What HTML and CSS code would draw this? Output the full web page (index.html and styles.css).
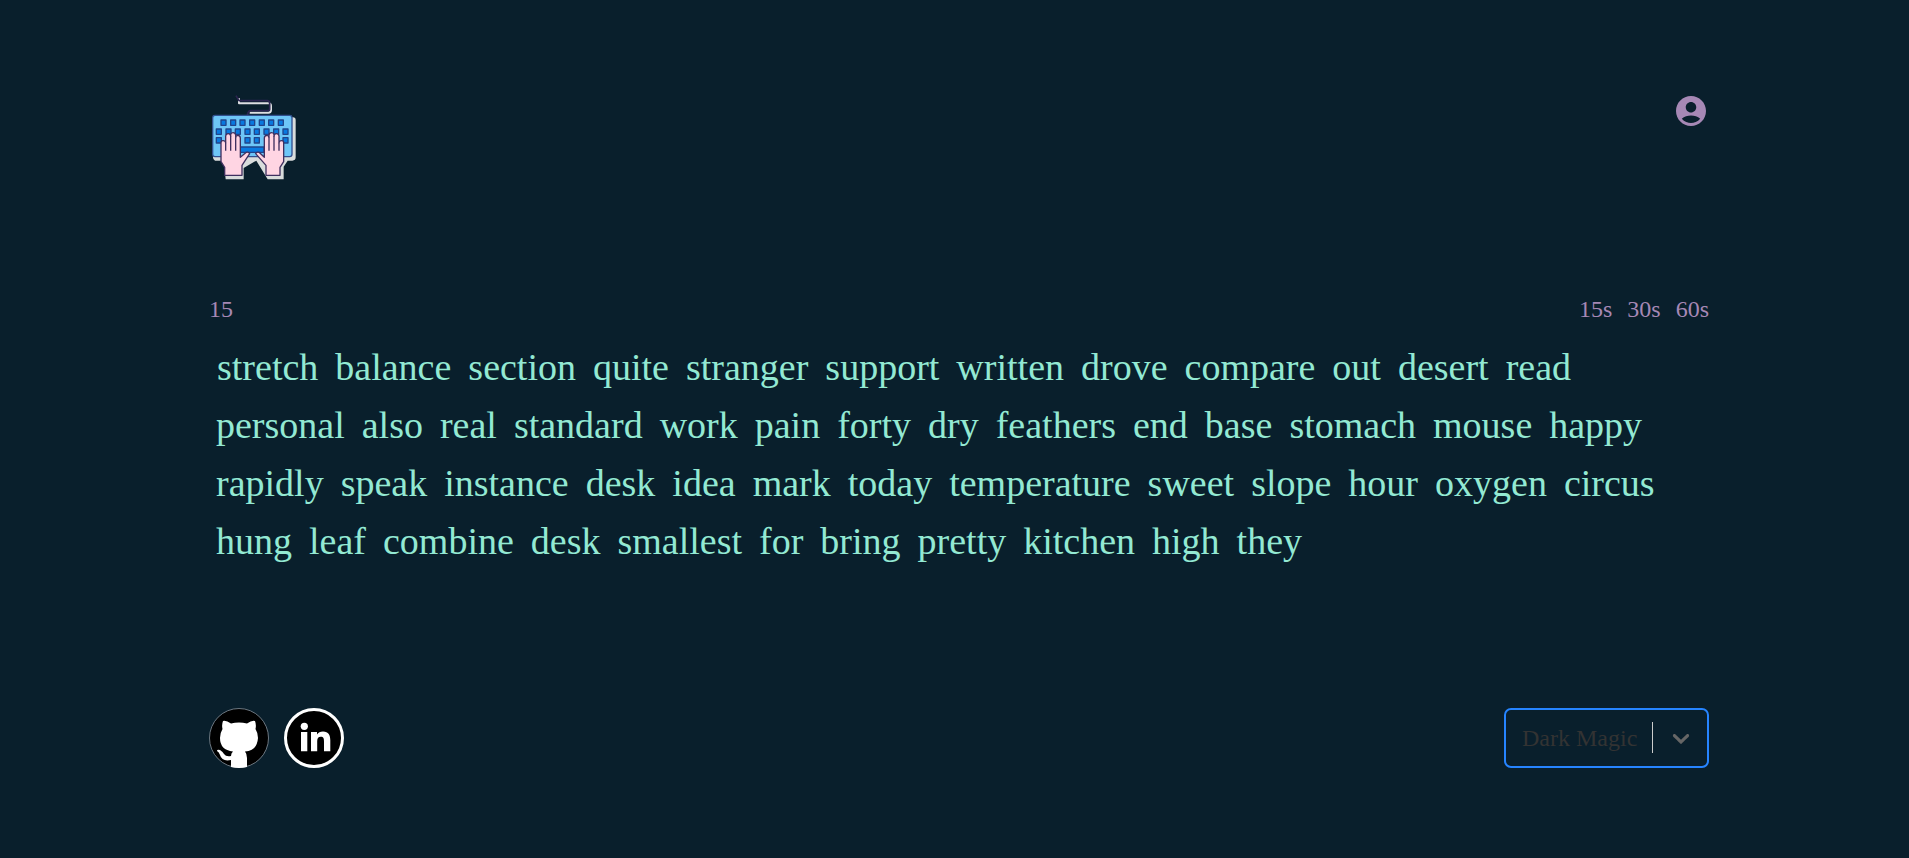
FILE: index.html
```html
<!DOCTYPE html>
<html lang="en">
<head>
<meta charset="utf-8">
<meta name="viewport" content="width=device-width, initial-scale=1">
<title>Typing Test</title>
<link rel="stylesheet" href="styles.css">
</head>
<body>
<div class="canvas">
  <header class="header">
    <svg class="logo" viewBox="28 25 270 270" role="img" aria-label="Typing test logo" stroke-linejoin="round">
      <g fill="#d9dcdc">
        <path d="M48 98H280Q288 98 288 106V218Q288 228 278 228H264L252 246V284H204L170 228L132 250V284H78L72 228H46Q40 226 40 218Z"/>
      </g>
      <path d="M118 41V56H208Q214 57 214 64V76Q214 84 206 84H150" fill="none" stroke="#dddfe2" stroke-width="6"/>
      <path d="M109 33L118 48H204Q211 49 210 60V74Q210 78 204 78H152Q145 80 143 91" fill="none" stroke="#2b2450" stroke-width="5"/>
      <rect x="39" y="92" width="238" height="124" rx="7" fill="#6ec6f7" stroke="#33508f" stroke-width="4"/>
      <g fill="#0879e0" stroke="#20458c" stroke-width="4">
        <path d="M64 106h15v16h-15zM93 106h15v16h-15zM121 106h15v16h-15zM150 106h15v16h-15zM179 106h15v16h-15zM207 106h15v16h-15zM236 106h15v16h-15z"/>
        <path d="M50 133h15v16h-15zM79 133h15v16h-15zM107 133h15v16h-15zM136 133h15v16h-15zM164 133h15v16h-15zM193 133h15v16h-15zM222 133h15v16h-15zM250 133h15v16h-15z"/>
        <path d="M50 159h15v16h-15zM136 159h15v16h-15zM164 159h15v16h-15zM250 159h15v16h-15zM121 187h72v16h-72z"/>
      </g>
      <path d="M75 272V248L64 231V174Q64 168 70 168Q77 168 78 174V154Q79 147 86 147Q92 147 93 154V150Q94 144 100 144Q107 144 108 151V158Q109 152 115 152Q122 153 122 160V218L140 203Q147 201 150 207L127 242V272Z" fill="#ffd5e3" stroke="#40305f" stroke-width="4"/>
      <path d="M78 174V198M93 154V198M108 158V198" fill="none" stroke="#40305f" stroke-width="4"/>
      <g transform="matrix(-1 0 0 1 316 0)">
        <path d="M75 272V248L64 231V174Q64 168 70 168Q77 168 78 174V154Q79 147 86 147Q92 147 93 154V150Q94 144 100 144Q107 144 108 151V158Q109 152 115 152Q122 153 122 160V218L138 203Q145 201 148 207L117 242V272Z" fill="#ffd5e3" stroke="#40305f" stroke-width="4"/>
        <path d="M78 174V198M93 154V198M108 158V198" fill="none" stroke="#40305f" stroke-width="4"/>
      </g>
    </svg>
    <button class="account" type="button" aria-label="Account">
      <svg viewBox="0 0 24 24" aria-hidden="true"><path fill="currentColor" d="M12 2C6.48 2 2 6.480 2 12s4.480 10 10 10 10-4.480 10-10S17.520 2 12 2zm0 4c1.930 0 3.500 1.570 3.500 3.500S13.930 13 12 13s-3.500-1.570-3.500-3.500S10.070 6 12 6zm0 14c-2.030 0-4.430-.82-6.140-2.880C7.550 15.800 9.680 15 12 15s4.450.8 6.140 2.120C16.430 19.180 14.030 20 12 20z"/></svg>
    </button>
  </header>

  <main class="test">
    <div class="menu">
      <span>15</span>
      <div class="modes">
        <button type="button">15s</button>
        <button type="button">30s</button>
        <button type="button">60s</button>
      </div>
    </div>
    <div class="words">
      <span><span class="current">s</span>tretch</span><span>balance</span><span>section</span><span>quite</span><span>stranger</span><span>support</span><span>written</span><span>drove</span><span>compare</span><span>out</span><span>desert</span><span>read</span>
      <span>personal</span><span>also</span><span>real</span><span>standard</span><span>work</span><span>pain</span><span>forty</span><span>dry</span><span>feathers</span><span>end</span><span>base</span><span>stomach</span><span>mouse</span><span>happy</span>
      <span>rapidly</span><span>speak</span><span>instance</span><span>desk</span><span>idea</span><span>mark</span><span>today</span><span>temperature</span><span>sweet</span><span>slope</span><span>hour</span><span>oxygen</span><span>circus</span>
      <span>hung</span><span>leaf</span><span>combine</span><span>desk</span><span>smallest</span><span>for</span><span>bring</span><span>pretty</span><span>kitchen</span><span>high</span><span>they</span>
    </div>
  </main>

  <footer class="footer">
    <nav class="links">
      <a href="#github" aria-label="GitHub">
        <svg viewBox="0 0 60 60" aria-hidden="true">
          <circle cx="30" cy="30" r="29.500" fill="#000" stroke="#87919a" stroke-width=".8"/>
          <path fill="#fff" d="M14 13Q17 12 22 15.500Q30 13.500 38 15.500Q43 12 46 13Q47.500 17 46.500 21Q49 25 49 30Q48 43 36 43.500Q38 46 38 50V59Q30 61 22 59V52Q13 54 11 47Q10 44 8 43Q8 41 11 42Q14 44 15 46Q17 49 22 48Q22 45 24 43.500Q11 42 11 30Q11 25 13.500 21Q12.500 17 14 13Z"/>
        </svg>
      </a>
      <a href="#linkedin" aria-label="LinkedIn">
        <svg viewBox="0 0 60 60" aria-hidden="true">
          <circle cx="30" cy="30" r="28.500" fill="#000" stroke="#fff" stroke-width="3"/>
          <circle cx="20.300" cy="18.300" r="3.600" fill="#fff"/>
          <path fill="#fff" d="M17 24h6.300v19.200H17zM27 24h6v2.600c1.200-2 3.300-3.200 6-3.200 5.600 0 7.300 3.500 7.300 8.800v11H40v-9.700c0-2.800-.4-4.800-3.200-4.800s-3.600 2-3.600 4.800v9.700H27z"/>
        </svg>
      </a>
    </nav>
    <div class="theme">
      <select aria-label="Theme"><option>Dark Magic</option></select>
      <span class="indicator" aria-hidden="true">
        <svg viewBox="0 0 20 20"><path fill="#666" d="M4.516 7.548c.436-.446 1.043-.481 1.576 0L10 11.295l3.908-3.747c.533-.481 1.141-.446 1.574 0 .436.445.408 1.197 0 1.615-.406.418-4.695 4.502-4.695 4.502a1.095 1.095 0 0 1-1.576 0S4.924 9.581 4.516 9.163s-.436-1.170 0-1.615z"/></svg>
      </span>
    </div>
  </footer>
</div>
</body>
</html>
```

FILE: styles.css
```css
* {
  box-sizing: border-box;
}

body {
  margin: 0;
  padding: 0 0 0 9px;
  background: #091f2c;
  color: #a688b5;
  font-family: "Liberation Serif", "Times New Roman", serif;
  font-size: 24px;
  line-height: 28px;
}

button {
  padding: 0;
  border: 0;
  background: none;
  color: inherit;
  font: inherit;
  cursor: pointer;
}

svg {
  display: block;
}

.canvas {
  display: grid;
  grid-template-rows: auto 1fr auto;
  max-width: 1500px;
  min-height: 100vh;
  margin: 0 auto;
  padding: 93px 0 90px;
}

.header {
  display: flex;
  align-items: flex-start;
  justify-content: space-between;
}

.logo {
  width: 90px;
  height: 90px;
}

.account svg {
  width: 36px;
  height: 36px;
}

.test {
  padding: 112px 0 40px;
}

.menu {
  display: flex;
  justify-content: space-between;
}

.modes {
  display: flex;
  gap: 15px;
}

.words {
  display: flex;
  flex-wrap: wrap;
  column-gap: 17px;
  padding: 15px 7px 0;
  color: #93e9d3;
  font-size: 38px;
  line-height: 58px;
}

.current {
  border-left: 1px solid transparent;
}

.footer {
  display: flex;
  align-items: center;
  justify-content: space-between;
}

.links {
  display: flex;
  gap: 15px;
}

.links svg {
  width: 60px;
  height: 60px;
}

.theme {
  position: relative;
}

.theme select {
  appearance: none;
  width: 205px;
  height: 60px;
  padding: 0 60px 0 16px;
  border: 2px solid #2684ff;
  border-radius: 7px;
  outline: 0;
  background: transparent;
  color: #333;
  font: inherit;
}

.indicator {
  position: absolute;
  top: 14px;
  right: 14px;
  display: flex;
  align-items: center;
  height: 31px;
  padding-left: 14px;
  border-left: 1px solid #ccc;
  pointer-events: none;
}

.indicator svg {
  width: 28px;
  height: 28px;
}
```
